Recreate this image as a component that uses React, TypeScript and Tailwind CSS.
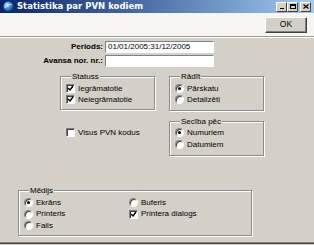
import React from "react";

function Check({ checked }: { checked?: boolean }) {
  return (
    <span className="w-[9px] h-[9px] bg-white border border-t-[#808080] border-l-[#808080] border-b-white border-r-white shadow-[inset_1px_1px_0_#404040] flex items-center justify-center shrink-0">
      {checked && (
        <svg width="7" height="7" viewBox="0 0 7 7">
          <path d="M1 3 L3 5 L6 1" stroke="#000" strokeWidth="1.4" fill="none" />
        </svg>
      )}
    </span>
  );
}

function Radio({ checked }: { checked?: boolean }) {
  return (
    <span className="w-[9px] h-[9px] rounded-full bg-white border border-t-[#808080] border-l-[#808080] border-b-white border-r-white shadow-[inset_1px_1px_0_#404040] flex items-center justify-center shrink-0">
      {checked && <span className="w-[3px] h-[3px] rounded-full bg-black" />}
    </span>
  );
}

function Option({ label, checked, kind }: { label: string; checked?: boolean; kind: "check" | "radio" }) {
  return (
    <div className="flex items-center gap-[3px] h-[11px]">
      {kind === "check" ? <Check checked={checked} /> : <Radio checked={checked} />}
      <span className="leading-none">{label}</span>
    </div>
  );
}

function Group({ title, className, children }: { title: string; className?: string; children: React.ReactNode }) {
  return (
    <fieldset className={"border border-[#8c8c8c] shadow-[inset_1px_1px_0_white,1px_1px_0_white] pl-[5px] " + (className ?? "")}>
      <legend className="ml-[5px] px-[1px] leading-[9px] bg-[#d4d0c8] text-black">{title}</legend>
      {children}
    </fieldset>
  );
}

function WinBtn({ children }: { children: React.ReactNode }) {
  return (
    <span className="w-[11px] h-[10px] bg-[#d4d0c8] border border-t-white border-l-white border-b-[#404040] border-r-[#404040] flex items-center justify-center">
      {children}
    </span>
  );
}

export default function App() {
  return (
    <div className="w-[314px] h-[245px] bg-[#d4d0c8] overflow-hidden flex flex-col text-[8px] text-black" style={{ fontFamily: '"Liberation Sans", Arial, sans-serif' }}>
      {/* title bar */}
      <div className="h-[13px] shrink-0 flex items-center bg-gradient-to-r from-[#0a246a] to-[#a6caf0] pl-[3px] pr-[3px]">
        <svg width="11" height="11" viewBox="0 0 11 11" className="shrink-0">
          <defs>
            <radialGradient id="g" cx="0.35" cy="0.35" r="0.7">
              <stop offset="0" stopColor="#e6f3ff" />
              <stop offset="0.5" stopColor="#3d8fd8" />
              <stop offset="1" stopColor="#0b3f86" />
            </radialGradient>
          </defs>
          <circle cx="5.5" cy="5.5" r="5" fill="url(#g)" />
          <path d="M2 7 C4 3 7 3 9 4" stroke="#ffffff" strokeWidth="1" fill="none" opacity="0.7" />
        </svg>
        <span className="ml-[3px] text-white font-bold text-[8.5px] leading-none" style={{ fontFamily: '"DejaVu Sans", sans-serif' }}>Statistika par PVN kodiem</span>
        <div className="ml-auto flex items-center">
          <WinBtn>
            <span className="w-[4px] h-[1px] bg-black mt-[4px]" />
          </WinBtn>
          <WinBtn>
            <span className="w-[6px] h-[5px] border border-black border-t-2" />
          </WinBtn>
          <span className="w-[2px]" />
          <WinBtn>
            <svg width="6" height="5" viewBox="0 0 6 5">
              <path d="M0.5 0.5 L5.5 4.5 M5.5 0.5 L0.5 4.5" stroke="#000" strokeWidth="1.2" />
            </svg>
          </WinBtn>
        </div>
      </div>

      {/* toolbar */}
      <div className="h-[24px] shrink-0 bg-[#f6f5f2] flex items-center justify-end pr-[7px] border-b border-[#a09c94]">
        <button className="w-[42px] h-[16px] bg-[#d4d0c8] border border-t-white border-l-white border-b-[#404040] border-r-[#404040] shadow-[inset_-1px_-1px_0_#808080] text-[8.5px] leading-none">
          OK
        </button>
      </div>

      <div className="flex-1 flex flex-col border-t border-white border-b border-b-[#808080]">
        <div className="flex items-center mt-[3px]">
          <span className="w-[103px] text-right font-bold leading-none">Periods:</span>
          <div className="ml-[2px] w-[109px] h-[12px] bg-white border border-t-[#808080] border-l-[#808080] border-b-white border-r-white flex items-center pl-[2px] leading-none">
            01/01/2005:31/12/2005
          </div>
        </div>
        <div className="flex items-center mt-[2px]">
          <span className="w-[103px] text-right font-bold leading-none">Avansa nor. nr.:</span>
          <div className="ml-[2px] w-[109px] h-[12px] bg-white border border-t-[#808080] border-l-[#808080] border-b-white border-r-white" />
        </div>

        <div className="flex mt-[5px]">
          <div className="ml-[60px] w-[95px] flex flex-col">
            <Group title="Statuss" className="pt-[2px] pb-[4px]">
              <Option kind="check" checked label="Iegrāmatotie" />
              <Option kind="check" checked label="Neiegrāmatotie" />
            </Group>
            <div className="mt-[17px] pl-[6px]">
              <Option kind="check" label="Visus PVN kodus" />
            </div>
          </div>
          <div className="ml-[14px] w-[95px] flex flex-col">
            <Group title="Rādīt" className="pt-[2px] pb-[5px]">
              <Option kind="radio" checked label="Pārskatu" />
              <Option kind="radio" label="Detalizēti" />
            </Group>
            <Group title="Secība pēc" className="mt-[6px] pt-[1px] pb-[5px] flex flex-col gap-[1px]">
              <Option kind="radio" checked label="Numuriem" />
              <Option kind="radio" label="Datumiem" />
            </Group>
          </div>
        </div>

        <Group title="Mēdijs" className="ml-[18px] w-[234px] mt-[30px] pt-[2px] pb-[4px]">
          <div className="grid grid-cols-[105px_1fr] gap-y-[0.5px]">
            <Option kind="radio" checked label="Ekrāns" />
            <Option kind="radio" label="Buferis" />
            <Option kind="radio" label="Printeris" />
            <Option kind="check" checked label="Printera dialogs" />
            <Option kind="radio" label="Fails" />
          </div>
        </Group>
      </div>
      <div className="h-[2px] shrink-0 border-t border-[#404040]" />
    </div>
  );
}
